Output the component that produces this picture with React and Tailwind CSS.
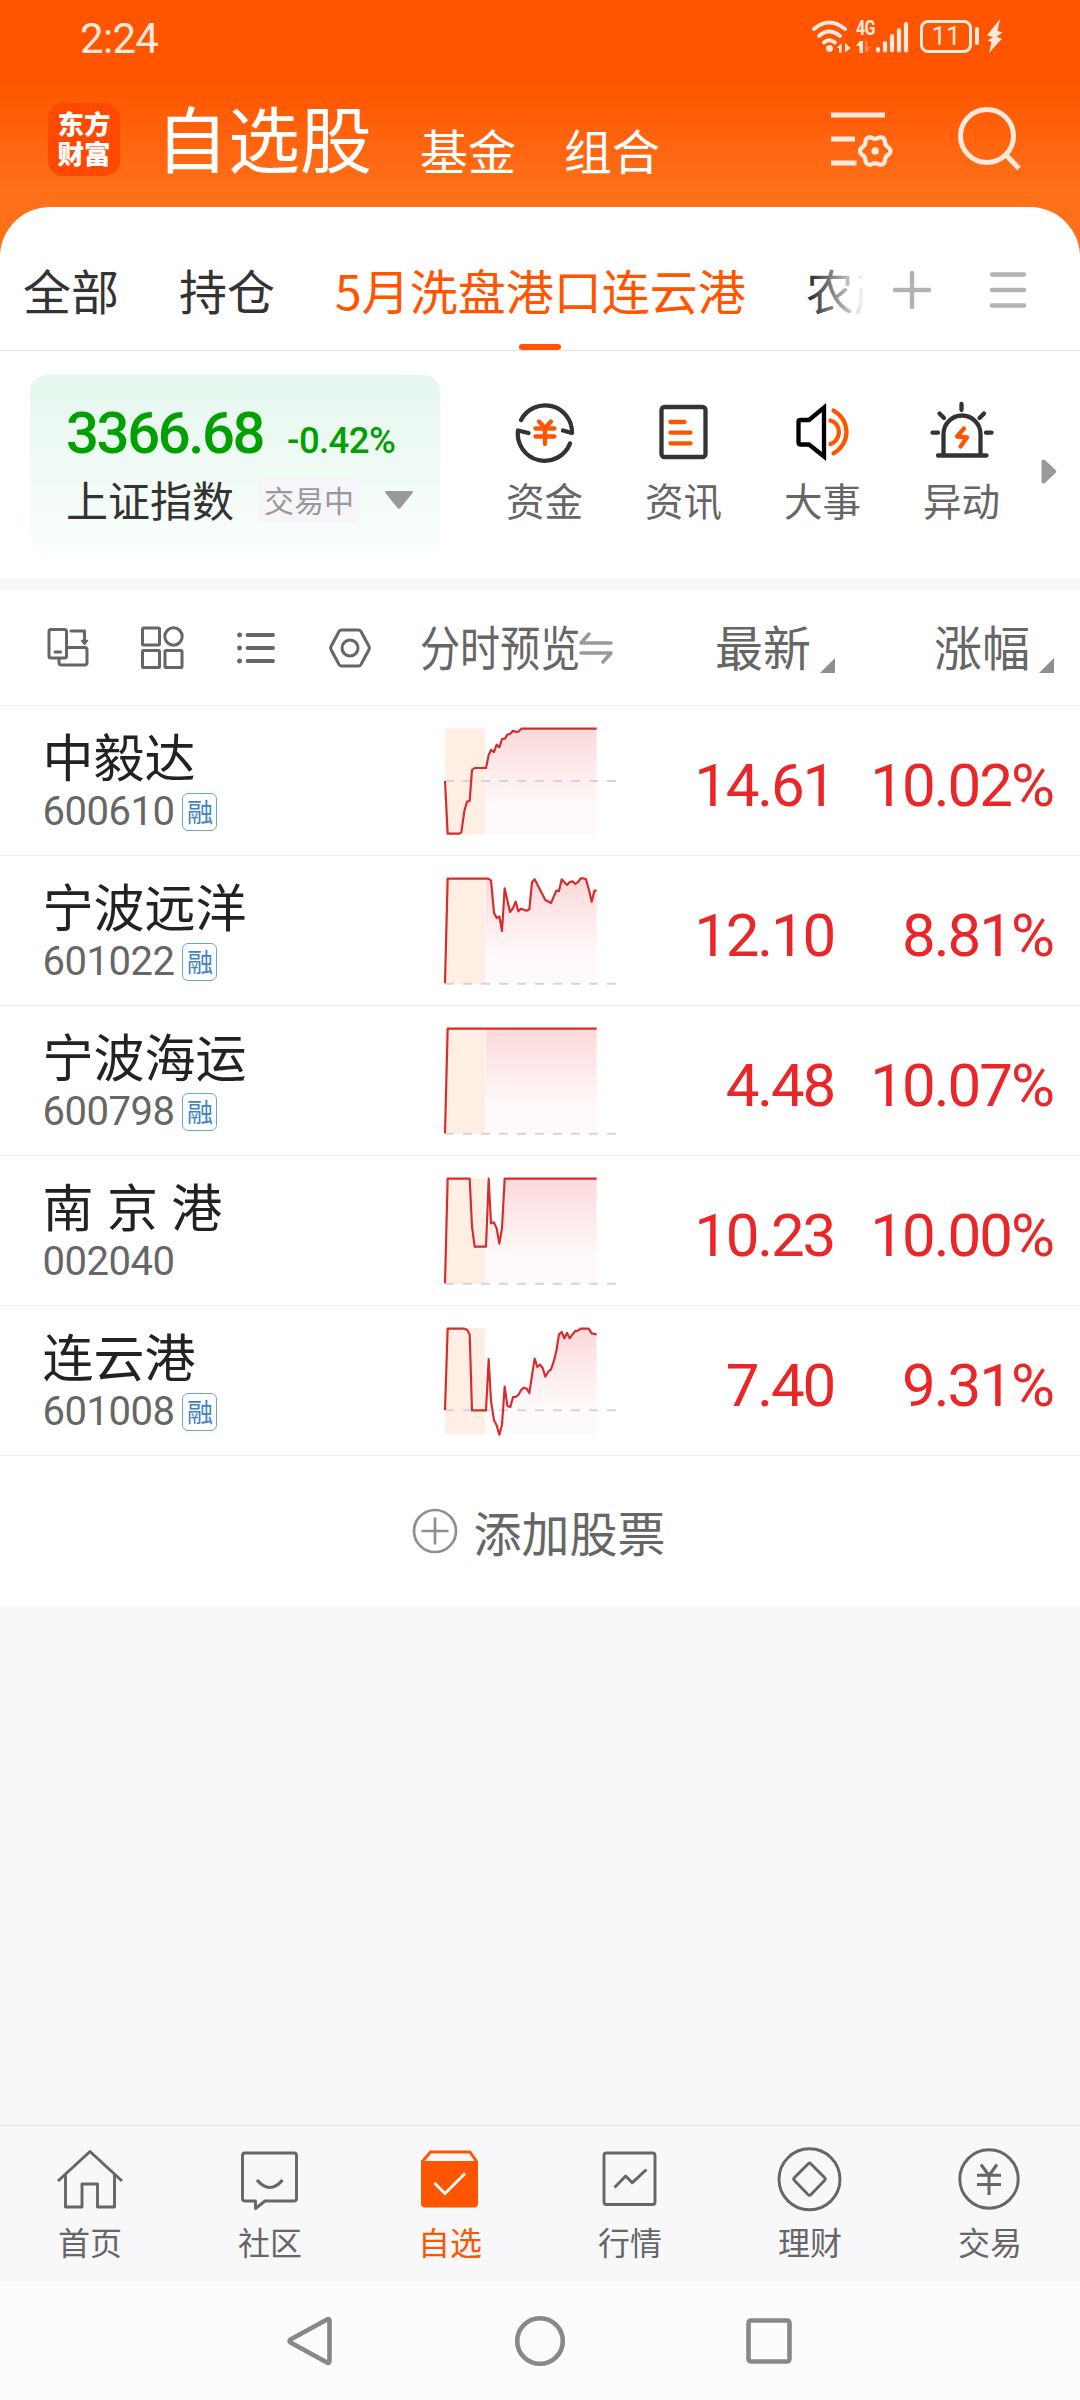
import React from 'react'

const stocks = [
  {
    name: "中毅达", code: "600610", rong: true, price: "14.61", change: "10.02%", base: 243,
    line: "75,243 83,401 118,401 124,397 133,333 141,305 149,303 156,210 164,204 198,204 206,165 213,150 222,156 230,134 238,142 246,117 255,116 262,104 270,102 279,92 288,96 295,95 304,86 530,86",
    area: "198,204 206,165 213,150 222,156 230,134 238,142 246,117 255,116 262,104 270,102 279,92 288,96 295,95 304,86 530,86",
  },
  {
    name: "宁波远洋", code: "601022", rong: true, price: "12.10", change: "8.81%", base: 401,
    line: "75,400 83,86 205,86 213,91 222,188 230,204 238,199 246,243 254,115 270,186 279,174 287,155 295,184 303,176 320,182 328,178 336,97 344,88 376,150 393,159 409,122 417,123 425,88 441,105 449,96 458,94 466,102 474,96 482,85 490,85 498,88 507,120 515,155 523,122 530,122",
    area: "198,86 205,86 213,91 222,188 230,204 238,199 246,243 254,115 270,186 279,174 287,155 295,184 303,176 320,182 328,178 336,97 344,88 376,150 393,159 409,122 417,123 425,88 441,105 449,96 458,94 466,102 474,96 482,85 490,85 498,88 507,120 515,155 523,122 530,122",
  },
  {
    name: "宁波海运", code: "600798", rong: true, price: "4.48", change: "10.07%", base: 401,
    line: "75,400 83,86 530,86",
    area: "198,86 530,86",
  },
  {
    name: "南 京 港", code: "002040", rong: false, price: "10.23", change: "10.00%", base: 401,
    line: "75,400 83,86 149,86 156,230 164,290 198,290 206,86 213,220 222,217 230,235 238,281 246,235 254,86 530,86",
    area: "198,290 206,86 213,220 222,217 230,235 238,281 246,235 254,86 530,86",
  },
  {
    name: "连云港", code: "601008", rong: true, price: "7.40", change: "9.31%", base: 331,
    line: "75,330 83,86 133,86 141,89 149,103 156,331 198,331 206,177 213,303 222,361 230,376 238,404 246,374 254,260 262,317 271,321 279,291 287,291 295,285 303,271 311,263 320,266 328,279 336,226 344,176 352,201 360,194 368,204 376,230 384,216 393,208 401,185 409,153 417,103 425,96 433,115 441,99 449,115 458,102 466,93 474,92 482,86 506,86 515,100 530,103",
    area: "198,331 206,177 213,303 222,361 230,376 238,401 246,374 254,260 262,317 271,321 279,291 287,291 295,285 303,271 311,263 320,266 328,279 336,226 344,176 352,201 360,194 368,204 376,230 384,216 393,208 401,185 409,153 417,103 425,96 433,115 441,99 449,115 458,102 466,93 474,92 482,86 506,86 515,100 530,103",
  },
];

// six-lobed outline of the settings gear
const gearPoints = Array.from({ length: 72 }, (_, i) => {
  const a = (i * Math.PI) / 36;
  const r = 13.7 + 1.5 * Math.cos(6 * a);
  return `${(46.2 + r * Math.cos(a)).toFixed(2)},${(45 + r * Math.sin(a)).toFixed(2)}`;
}).join(" ");

function StatusBar() {
  return (
    <div className="h-[76px] flex items-center justify-between pl-[80px] pr-[77px] text-[#ffe9dd]">
      <span className="font-[Roboto] text-[42px] leading-none tracking-[-0.700px] mt-[1px]">2:24</span>
      <div className="flex items-center h-[34px] -mt-[4px]">
        <svg className="w-[42px] h-[34px]" viewBox="0 0 42 34" fill="none" stroke="currentColor" strokeWidth="4" strokeLinecap="round">
          <path d="M3 10Q18 -3 34 10" />
          <path d="M8 17Q18 8 29 17" />
          <path d="M13 23.5Q18 19 24 23.5" />
          <circle cx="18.5" cy="29.5" r="3.4" fill="currentColor" stroke="none" />
          <path d="M25.500 29l5-5v9.500h-2.500v-4.500zM39.500 29l-5.500-5v9.500z" fill="currentColor" stroke="none" />
        </svg>
        <div className="flex flex-col w-[19px] ml-[3px] h-[34px]">
          <span className="font-[Roboto] font-bold text-[20px] leading-[18px] tracking-[-1px] origin-left scale-x-[.8]">4G</span>
          <svg className="w-[18px] h-[13px] mt-[3px]" viewBox="0 0 18 13" fill="currentColor">
            <path d="M0 6L4 1H7V13H3.500V6Z" />
            <path d="M9 1h2.500v6H15l-4 5H9z" opacity=".35" />
          </svg>
        </div>
        <svg className="w-[34px] h-[34px]" viewBox="0 0 34 34" fill="none" stroke="currentColor" strokeWidth="4.200" strokeLinecap="round">
          <path d="M3 30V31.500M10 24V31.500M17 17V31.500M24 11V31.500M31 5V31.500" />
        </svg>
        <div className="w-[52px] h-[33px] ml-[11px] border-[3px] border-[#ffe9dd] rounded-[8px] flex items-center justify-center">
          <span className="font-[Roboto] text-[26px] leading-none">11</span>
        </div>
        <div className="w-[4px] h-[18px] ml-[3px] rounded-full bg-[#ffe9dd]" />
        <svg className="w-[16px] h-[34px] ml-[8px]" viewBox="0 0 16 34" fill="currentColor">
          <path d="M13 0L0 16.500L6 18L0.500 21.500L4.500 23L2 34L15 19.500L9.500 18L15.500 13.500L10.500 12Z" />
        </svg>
      </div>
    </div>
  )
}

function Header() {
  return (
    <div className="h-[131px] flex pl-[48px] pr-[58px] text-white">
      <div className="w-[72px] h-[73px] mt-[27px] rounded-[15px] bg-[#ff4800] flex flex-col items-center justify-center pb-[4px] font-black text-[26.500px] leading-[30px]">
        <span>东方</span>
        <span>财富</span>
      </div>
      <div className="flex items-baseline h-[72px] mt-[24px] ml-[36px] gap-[48px] leading-none">
        <span className="text-[72px]">自选股</span>
        <span className="text-[48px] relative top-[3px]">基金</span>
        <span className="text-[48px] relative top-[3px]">组合</span>
      </div>
      <div className="ml-auto flex mt-[30px] text-[#ffe9dd]">
        <svg className="w-[66px] h-[66px]" viewBox="0 0 66 66" fill="none" stroke="currentColor" strokeWidth="4.800">
          <path d="M2 9H56M2 33H26M2 57H27.500" />
          <polygon points={gearPoints} strokeWidth="4.300" strokeLinejoin="round" />
          <circle cx="46.200" cy="45" r="3.800" fill="currentColor" stroke="none" />
        </svg>
        <svg className="w-[66px] h-[66px] ml-[61px]" viewBox="0 0 66 66" fill="none" stroke="currentColor" strokeWidth="5">
          <ellipse cx="31" cy="30" rx="26.500" ry="26.500" />
          <path d="M50 49L63 62.500" />
        </svg>
      </div>
    </div>
  )
}

function Tabs() {
  return (
    <div className="h-[144px] flex items-center border-b border-[#e4e4e4] text-[48px] leading-none text-[#333]">
      <div className="relative flex gap-[60px] pl-[23px] w-[863px] h-full items-center overflow-hidden whitespace-nowrap">
        <span className="pt-[20px]">全部</span>
        <span className="pt-[20px]">持仓</span>
        <div className="relative h-full flex items-center text-[#ff5500] pt-[20px]">
          <span>5月洗盘港口连云港</span>
          <div className="absolute bottom-0 left-1/2 -translate-x-1/2 w-[42px] h-[6px] rounded-full bg-[#ff5500]" />
        </div>
        <span className="pt-[20px]">农产</span>
        <div className="absolute right-0 top-0 w-[52px] h-full bg-linear-to-r from-white/0 to-white/95" />
      </div>
      <svg className="w-[42px] h-[42px] ml-[28px] mt-[22px]" viewBox="0 0 42 42" fill="none" stroke="#b3b3b3" strokeWidth="4.500" strokeLinecap="round">
        <path d="M21 4V38M4 21H38" />
      </svg>
      <svg className="w-[42px] h-[42px] ml-[54px] mt-[22px]" viewBox="0 0 42 42" fill="none" stroke="#b3b3b3" strokeWidth="4.500" strokeLinecap="round">
        <path d="M5 5.500H37M5 21H37M5 36.500H37" />
      </svg>
    </div>
  )
}

function QuickItem({ label, children }) {
  return (
    <div className="w-[139px] flex flex-col items-center">
      <svg className="w-[64px] h-[64px]" viewBox="0 0 64 64" fill="none" stroke="#333" strokeWidth="4.300" strokeLinecap="round" strokeLinejoin="round">
        {children}
      </svg>
      <span className="mt-[16px] text-[38.500px] leading-[39px] text-[#666]">{label}</span>
    </div>
  )
}

function MarketBar() {
  return (
    <div className="h-[228px] flex pl-[30px]">
      <div className="w-[410px] h-[180px] mt-[24px] rounded-[17px] bg-linear-to-b from-[#e4f6ed] to-[#fbfffd] pl-[36px]">
        <div className="flex items-baseline mt-[29px] h-[58px] font-[Roboto] font-medium leading-none text-[#00a000]">
          <span className="text-[58px] leading-[58px] tracking-[-2.400px]">3366.68</span>
          <span className="ml-[24px] text-[36.500px] tracking-[-0.600px]">-0.42%</span>
        </div>
        <div className="flex items-center mt-[16px] h-[43px]">
          <span className="text-[42px] leading-none text-[#333] -mt-[2px]">上证指数</span>
          <span className="ml-[24px] w-[102px] h-[46px] rounded-[6px] bg-[#f6f6fa] text-center text-[30px] leading-[44px] text-[#999]">交易中</span>
          <svg className="w-[28px] h-[18px] ml-[25px]" viewBox="0 0 28 18" fill="#999">
            <path d="M1 0H27Q28.500 0.500 27.500 2L15.500 17Q14 18.500 12.500 17L0.500 2Q-0.500 0.500 1 0Z" />
          </svg>
        </div>
      </div>
      <div className="flex ml-[35px] mt-[49px]">
        <QuickItem label="资金">
          <path d="M8 20A27 27 0 0 1 59 33L50 30.500" />
          <path d="M15.500 33L5 30.500A27 27 0 0 0 57 43.500" />
          <path d="M26 21.500L32 28L38 21.500M22.500 28.500H41.500M22.500 36.500H41.500M32 28V44" stroke="#ff5500" />
        </QuickItem>
        <QuickItem label="资讯">
          <rect x="9.500" y="7" width="44" height="50" rx="3" />
          <path d="M18.500 22H32.500M18.500 32.700H38.500M18.500 43.300H38.500" stroke="#ff5500" />
        </QuickItem>
        <QuickItem label="大事">
          <path d="M7.500 22Q7.500 20 9.500 20H18L33 7.500V56.500L18 44.500H9.500Q7.500 44.500 7.500 42.500Z" stroke="#000" strokeLinejoin="miter" />
          <path d="M42.500 10.500Q55 18 55.500 32Q55 46 42.500 53.500M39.500 20.500Q47.500 23 48 32Q47.500 41 39.500 44" stroke="#ff5500" />
        </QuickItem>
        <QuickItem label="异动">
          <path d="M13.500 55V34A18.500 18.500 0 0 1 50.500 34V55M8 55.500H56.500" />
          <path d="M31.500 4V10M9.500 13.500L14 18M54 13.500L49.500 18M2.500 32.700H8M56 32.700H61.500" />
          <path d="M34 28.500L27 36.500L37 37.500L30.500 46.500" stroke="#ff5500" />
        </QuickItem>
      </div>
      <svg className="w-[16px] h-[25px] mt-[108px] ml-[10px]" viewBox="0 0 16 25" fill="#999">
        <path d="M0.500 2.500Q1 -0.500 4 1L14.500 11Q16 12.500 14.500 14L4 24Q1 25.500 0.500 22.500Z" />
      </svg>
    </div>
  )
}

function SortMark() {
  return (
    <svg className="w-[15px] h-[15px] self-end mb-[32px] ml-[9px]" viewBox="0 0 15 15" fill="#8e8e93">
      <path d="M15 0V15H0Z" />
    </svg>
  )
}

function TableHead() {
  return (
    <div className="h-[115px] flex items-center border-b border-[#ececec] text-[48px] leading-none text-[#666]">
      <div className="flex w-[420px] pl-[45px] gap-[48px]">
        <svg className="w-[46px] h-[46px]" viewBox="0 0 46 46" fill="none" stroke="#666" strokeWidth="3" strokeLinecap="round" strokeLinejoin="round">
          <rect x="4" y="4.500" width="17.500" height="28.500" rx="2" />
          <path d="M10 27H15.500" />
          <path d="M26 6H39.500V16" />
          <path d="M36.500 15.500H42.500L39.500 19.500Z" fill="#666" strokeWidth="1.500" />
          <path d="M22 22.500H39.500Q42 22.500 42 25V37.500Q42 40 39.500 40H16.500Q14 40 14 37.500V34" />
        </svg>
        <svg className="w-[46px] h-[46px]" viewBox="0 0 46 46" fill="none" stroke="#666" strokeWidth="3">
          <rect x="3.500" y="3" width="17" height="17" rx="1" />
          <circle cx="34.500" cy="11.500" r="8.700" />
          <rect x="3.500" y="25.500" width="17" height="17" rx="1" />
          <rect x="26" y="25.500" width="17" height="17" rx="1" />
        </svg>
        <svg className="w-[46px] h-[46px]" viewBox="0 0 46 46" fill="none" stroke="#666" strokeWidth="3.800" strokeLinecap="round">
          <path d="M14.500 10H40M14.500 23H40M14.500 36H40" />
          <path d="M6.500 10H6.600M6.500 23H6.600M6.500 36H6.600" strokeWidth="4.800" />
        </svg>
        <svg className="w-[46px] h-[46px]" viewBox="0 0 46 46" fill="none" stroke="#666" strokeWidth="3" strokeLinejoin="round">
          <path d="M14.500 5H31.500Q33 5 34 6.500L42 21.500Q42.800 23 42 24.500L34 39.500Q33 41 31.500 41H14.500Q13 41 12 39.500L4 24.500Q3.200 23 4 21.500L12 6.500Q13 5 14.500 5Z" />
          <circle cx="23" cy="23" r="8" />
        </svg>
      </div>
      <div className="w-[159px] -mt-[7px] whitespace-nowrap">
        <span className="inline-block origin-left scale-x-[.835]">分时预览</span>
      </div>
      <svg className="w-[34px] h-[32px]" viewBox="0 0 34 32" fill="none" stroke="#999" strokeWidth="3.400" strokeLinecap="round" strokeLinejoin="round">
        <path d="M32 11H2L10 2M2 21H32L24 30" />
      </svg>
      <div className="w-[222px] h-full flex items-center justify-end">
        <span className="-mt-[7px]">最新</span>
        <SortMark />
      </div>
      <div className="w-[219px] h-full flex items-center justify-end">
        <span className="-mt-[7px]">涨幅</span>
        <SortMark />
      </div>
    </div>
  )
}

function MiniChart({ line, area, base }) {
  return (
    <svg className="w-[176px] h-[149px] overflow-visible" viewBox="75 18 528 447" fill="none">
      <defs>
        <linearGradient id="fade" gradientUnits="userSpaceOnUse" x1="0" y1="86" x2="0" y2="401">
          <stop offset="0" stopColor="#fcd9da" />
          <stop offset=".75" stopColor="#fffafa" />
          <stop offset="1" stopColor="#fffafa" />
        </linearGradient>
      </defs>
      <rect x="75" y="85" width="120" height="317" fill="#ffeee4" />
      <polygon points={area + " 530,401 198,401"} fill="url(#fade)" />
      <path d={`M75 ${base}H588`} stroke="#d3d5da" strokeWidth="6" strokeDasharray="27 27" />
      <polyline points={line} stroke="#d62c2d" strokeWidth="6.500" strokeLinejoin="round" />
    </svg>
  )
}

function StockRow({ stock }) {
  return (
    <div className="h-[150px] flex border-b border-[#ececec]">
      <div className="w-[445px] pl-[42.500px] pt-[24px]">
        <div className="text-[51px] leading-[51px] text-[#222] [word-spacing:2px]">{stock.name}</div>
        <div className="flex items-center h-[40px] mt-[11px]">
          <span className="font-[Roboto] text-[40px] leading-none tracking-[-0.500px] text-[#666]">{stock.code}</span>
          {stock.rong && (
            <span className="w-[35px] h-[38px] ml-[8px] border-[1.500px] border-[#6aa3d8] rounded-[6px] text-center text-[26px] leading-[33px] text-[#3f83c4]">
              融
            </span>
          )}
        </div>
      </div>
      <MiniChart line={stock.line} area={stock.area} base={stock.base} />
      <div className="w-[213px] mt-[50px] text-right font-[Roboto] text-[60px] leading-[60px] tracking-[-2.200px] text-[#e92628]">{stock.price}</div>
      <div className="w-[219px] mt-[50px] text-right font-[Roboto] text-[60px] leading-[60px] tracking-[-2px] text-[#e92628]">{stock.change}</div>
    </div>
  )
}

function NavItem({ label, active, children }) {
  return (
    <div className="w-[180px] flex flex-col items-center pt-[17px]">
      <svg className="w-[72px] h-[72px]" viewBox="0 0 72 72" fill="none" stroke={active ? "#ff5500" : "#666"} strokeWidth="2.900" strokeLinejoin="round">
        {children}
      </svg>
      <span className={`mt-[10px] text-[32px] leading-[32px] ${active ? "text-[#ff5500]" : "text-[#666]"}`}>{label}</span>
    </div>
  )
}

function BottomNav() {
  return (
    <div className="h-[157px] flex border-t border-[#dfe2e4] bg-[#f8f8fa]">
      <NavItem label="首页">
        <path d="M4 38L36 8.500L68 38" strokeWidth="3" />
        <path d="M11.500 32V64H28V41H43.500V64H60.500V32" />
      </NavItem>
      <NavItem label="社区">
        <path d="M11 10H60Q62.500 10 62.500 12.500V55.500Q62.500 58 60 58H31L21.500 65.500V58H11Q8.500 58 8.500 55.500V12.500Q8.500 10 11 10Z" />
        <path d="M23 37Q36 52 48.500 37" strokeWidth="3.200" />
      </NavItem>
      <NavItem label="自选" active>
        <path d="M8 19L16.500 9H56L63 19" />
        <path d="M7 18H64V60.500Q64 64.500 60 64.500H11Q7 64.500 7 60.500Z" fill="#ff5500" stroke="none" />
        <path d="M20.500 40L31 50.500L51 30.500" stroke="#fff" strokeLinejoin="miter" />
      </NavItem>
      <NavItem label="行情">
        <rect x="10" y="10" width="51" height="51.500" rx="2.500" />
        <path d="M20.500 44.500L31.700 33L38.300 39.700L52.500 26.500" strokeWidth="3" />
      </NavItem>
      <NavItem label="理财">
        <circle cx="35.500" cy="36.300" r="30.500" />
        <path d="M34 21Q35.500 19 37 21L50.500 34.500Q52 36 50.500 37.500L37 51.500Q35.500 53 34 51.500L20.500 37.500Q19 36 20.500 34.500Z" />
      </NavItem>
      <NavItem label="交易">
        <circle cx="35" cy="36" r="29.200" />
        <path d="M27 21.500L35 32.500L43 21.500M35 32V52M23 32.300H47M23 41.500H47" strokeWidth="3" />
      </NavItem>
    </div>
  )
}

function SystemNav() {
  return (
    <div className="h-[118px] flex justify-center items-center gap-[173px] bg-[#fcfcfc]">
      <svg className="w-[56px] h-[56px]" viewBox="0 0 56 56" fill="none" stroke="#888" strokeWidth="4.600" strokeLinejoin="round">
        <path d="M44 6.500Q46.500 5 46.500 8V48Q46.500 51 44 49.500L7.500 29.500Q5.500 28 7.500 26.500Z" />
      </svg>
      <svg className="w-[56px] h-[56px]" viewBox="0 0 56 56" fill="none" stroke="#888" strokeWidth="4.600">
        <circle cx="28" cy="28" r="22.800" />
      </svg>
      <svg className="w-[56px] h-[56px]" viewBox="0 0 56 56" fill="none" stroke="#888" strokeWidth="4.600">
        <rect x="7.500" y="7.500" width="41" height="41" rx="2.500" />
      </svg>
    </div>
  )
}

function App() {
  return (
    <div className={`w-[1080px] h-[2400px] flex flex-col overflow-hidden bg-[#f7f8fa] font-['Noto_Sans_CJK_SC',sans-serif]`}>
      <div className="h-[260px] bg-linear-to-b from-[#ff5500] from-[32%] to-[#ff7018] to-[75%]">
        <StatusBar />
        <Header />
      </div>
      <div className="-mt-[53px] bg-white rounded-t-[50px]">
        <Tabs />
        <MarketBar />
      </div>
      <div className="h-[12px] bg-[#f7f8fa]" />
      <div className="bg-white">
        <TableHead />
        {stocks.map((stock) => (
          <StockRow key={stock.code} stock={stock} />
        ))}
        <div className="h-[150px] flex items-center justify-center pr-[2px]">
          <svg className="w-[46px] h-[46px]" viewBox="0 0 46 46" fill="none" stroke="#8e8e93" strokeWidth="2.700">
            <circle cx="23" cy="23" r="21" />
            <path d="M23 9.500V36.500M9.500 23H36.500" />
          </svg>
          <span className="ml-[15px] text-[48px] leading-none text-[#666] -mt-[1px]">添加股票</span>
        </div>
      </div>
      <div className="flex-1" />
      <BottomNav />
      <SystemNav />
    </div>
  )
}

export default App
